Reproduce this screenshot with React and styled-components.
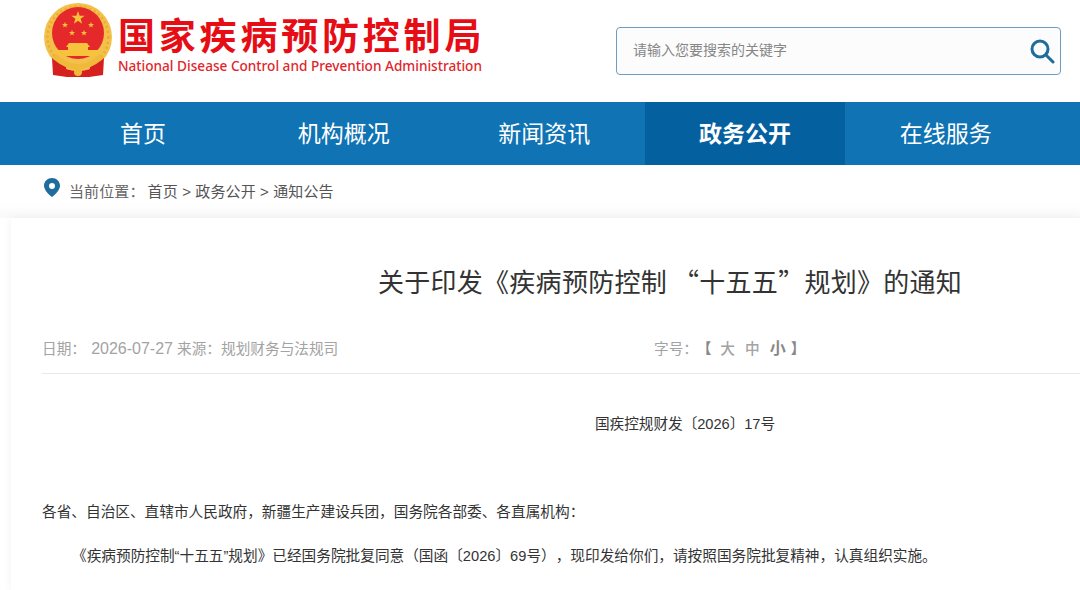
import React from "react";
import styled, { createGlobalStyle } from "styled-components";

const CJK = `"Noto Sans CJK SC", "Liberation Sans", sans-serif`;
const BODY = `"Liberation Sans", "Noto Sans CJK SC", sans-serif`;

const Global = createGlobalStyle`
  html, body { margin: 0; padding: 0; background: #fff; overflow: hidden; }
  body { width: 1080px; height: 590px; font-family: ${CJK}; }
`;

const Page = styled.div`
  width: 1080px;
  height: 590px;
  overflow: hidden;
  display: flex;
  flex-direction: column;
  background: #fff;
`;

const Header = styled.header`
  height: 102px;
  display: flex;
  justify-content: space-between;
  align-items: flex-start;
  padding: 0 19px 0 43px;
  box-sizing: border-box;
`;

const Brand = styled.div`
  display: flex;
  gap: 5px;
  padding-top: 3px;
`;

const BrandText = styled.div`
  display: flex;
  flex-direction: column;
  padding-top: 11px;
`;

const BrandTitle = styled.div`
  font-size: 37px;
  line-height: 40px;
  font-weight: 700;
  color: #e60d14;
  letter-spacing: 3.8px;
  white-space: nowrap;
`;

const BrandSub = styled.div`
  font-family: "Noto Sans", "Open Sans", sans-serif;
  font-size: 13.62px;
  line-height: 18px;
  font-weight: 500;
  color: #e0262c;
  white-space: nowrap;
  margin-top: 3px;
`;

const SearchBox = styled.div`
  margin-top: 27px;
  width: 445px;
  height: 48px;
  box-sizing: border-box;
  border: 1px solid #6f9dc2;
  border-radius: 4px;
  background: #fcfcfc;
  display: flex;
  align-items: center;
  justify-content: space-between;
  padding: 0 5px 0 16px;
`;

const Placeholder = styled.span`
  font-size: 14px;
  color: #868686;
  padding-bottom: 5px;
`;

const Nav = styled.nav`
  height: 63px;
  background: #0f73b4;
  display: flex;
  padding-left: 42.6px;
`;

const NavItem = styled.div`
  width: 200.7px;
  display: flex;
  align-items: center;
  justify-content: center;
  padding-bottom: 4px;
  box-sizing: border-box;
  font-size: 23px;
  color: #fff;
  font-weight: ${(p) => (p.$active ? 700 : 400)};
  background: ${(p) => (p.$active ? "#0560a0" : "transparent")};
`;

const Crumbs = styled.div`
  height: 53px;
  display: flex;
  align-items: center;
  padding: 0 0 3px 44px;
  font-family: ${BODY};
  font-size: 15px;
  letter-spacing: 0.12px;
  color: #555;
  background: linear-gradient(#fff 70%, #f9f9f9);
  box-sizing: border-box;
  white-space: pre;
`;

const CrumbLabel = styled.span`
  margin: 0 3px 0 9px;
  color: #666;
`;

const Article = styled.main`
  flex: 1;
  margin-left: 11px;
  padding: 0 0 0 31px;
  background: #fff;
  box-shadow: 0 0 10px rgba(0, 0, 0, 0.05);
`;

const Title = styled.h1`
  margin: 44px 0 0;
  padding-left: 336px;
  font-size: 26px;
  line-height: 38px;
  letter-spacing: 0.27px;
  font-weight: 400;
  color: #333;
  white-space: pre;
`;

const MetaRow = styled.div`
  display: flex;
  height: 74px;
  padding-top: 38px;
  box-sizing: border-box;
  border-bottom: 1px solid #e8e8e8;
  font-family: ${BODY};
  font-size: 14.67px;
  line-height: 22px;
  color: #a3a3a3;
  white-space: pre;
`;

const MetaLeft = styled.div`
  width: 612px;
`;

const DateText = styled.span`
  font-size: 16px;
  margin-left: -3px;
`;

const SizeBtn = styled.span`
  margin-left: ${(p) => p.$gap ?? 0}px;
  font-size: ${(p) => (p.$big ? 16 : 14.67)}px;
  font-weight: ${(p) => (p.$on ? 700 : 500)};
  color: ${(p) => (p.$on ? "#888" : "#a3a3a3")};
`;

const DocNo = styled.p`
  margin: 39px 0 0;
  padding-left: 553px;
  font-family: ${BODY};
  font-size: 14.67px;
  line-height: 22px;
  letter-spacing: -0.05px;
  color: #333;
`;

const Para = styled.p`
  margin: ${(p) => p.$top}px 0 0;
  padding-left: ${(p) => p.$indent ?? 0}px;
  font-family: ${BODY};
  font-size: 14.67px;
  line-height: 22px;
  color: #333;
  white-space: nowrap;
  text-spacing-trim: space-all;
`;

const starPoints = (cx, cy, r) =>
  Array.from({ length: 10 }, (_, i) => {
    const a = -Math.PI / 2 + (i * Math.PI) / 5;
    const rr = i % 2 ? r * 0.4 : r;
    return `${(cx + rr * Math.cos(a)).toFixed(2)},${(cy + rr * Math.sin(a)).toFixed(2)}`;
  }).join(" ");

const Emblem = () => (
  <svg width="70" height="76" viewBox="43 3 70 76">
    <circle cx="78" cy="37" r="34" fill="#f3c04a" />
    <circle cx="78" cy="37" r="30.5" fill="none" stroke="#e8ac33" strokeWidth="2.5" strokeDasharray="2 3" />
    <circle cx="78" cy="33" r="26" fill="#e5292a" />
    <g fill="#f7c33c">
      <polygon points={starPoints(78, 18, 7)} />
      <polygon points={starPoints(65, 25, 3.2)} />
      <polygon points={starPoints(91, 25, 3.2)} />
      <polygon points={starPoints(72, 33, 3.2)} />
      <polygon points={starPoints(84, 33, 3.2)} />
      <path d="M69 43 h18 l3 4 h-2 v3 h10 v6 H58 v-6 h10 v-3 h-2 z" />
    </g>
    <path d="M52 58 L66 67 L67 77 L53 75 Z M104 58 L90 67 L89 77 L103 75 Z" fill="#d5201f" />
    <path d="M66 69 Q78 73 90 69 L90 77 H66 Z" fill="#d5201f" />
    <path d="M56 54 Q78 74 100 54 L103 59 Q78 80 53 59 Z" fill="#f1b93a" />
    <circle cx="78" cy="72" r="4" fill="#f1b93a" />
  </svg>
);

const SearchIcon = () => (
  <svg width="26" height="26" viewBox="0 0 26 26" fill="none" stroke="#1f6c9f" strokeWidth="3">
    <circle cx="11" cy="11" r="8" />
    <path d="M17 17 L24 24" strokeLinecap="round" />
  </svg>
);

const Pin = () => (
  <svg width="16" height="20" viewBox="0 0 16 20" style={{ marginTop: -5 }}>
    <path
      fillRule="evenodd"
      d="M8 0 C3.6 0 0 3.4 0 7.6 C0 12 4.6 16.6 8 19 C11.4 16.6 16 12 16 7.6 C16 3.4 12.4 0 8 0 Z M8 5 A3 3 0 1 1 8 11 A3 3 0 1 1 8 5 Z"
      fill="#1f6c9f"
    />
  </svg>
);

const NAV = ["首页", "机构概况", "新闻资讯", "政务公开", "在线服务"];

export default function App() {
  return (
    <Page>
      <Global />
      <Header>
        <Brand>
          <Emblem />
          <BrandText>
            <BrandTitle>国家疾病预防控制局</BrandTitle>
            <BrandSub>National Disease Control and Prevention Administration</BrandSub>
          </BrandText>
        </Brand>
        <SearchBox>
          <Placeholder>请输入您要搜索的关键字</Placeholder>
          <SearchIcon />
        </SearchBox>
      </Header>
      <Nav>
        {NAV.map((n) => (
          <NavItem key={n} $active={n === "政务公开"}>{n}</NavItem>
        ))}
      </Nav>
      <Crumbs>
        <Pin />
        <CrumbLabel>当前位置：</CrumbLabel>
        {"首页 > 政务公开 > 通知公告"}
      </Crumbs>
      <Article>
        <Title>关于印发《疾病预防控制 “十五五”规划》的通知</Title>
        <MetaRow>
          <MetaLeft>日期：  <DateText>2026-07-27</DateText> 来源：规划财务与法规司</MetaLeft>
          <div>
            字号：<SizeBtn $gap={6} $on>【</SizeBtn><SizeBtn $gap={9}>大</SizeBtn><SizeBtn $gap={10}>中</SizeBtn><SizeBtn $gap={10} $on $big>小</SizeBtn><SizeBtn $gap={5} $on>】</SizeBtn>
          </div>
        </MetaRow>
        <DocNo>国疾控规财发〔2026〕17号</DocNo>
        <Para $top={66}>各省、自治区、直辖市人民政府，新疆生产建设兵团，国务院各部委、各直属机构：</Para>
        <Para $top={22} $indent={30}>《疾病预防控制“十五五”规划》已经国务院批复同意（国函〔2026〕69号），现印发给你们，请按照国务院批复精神，认真组织实施。</Para>
      </Article>
    </Page>
  );
}
